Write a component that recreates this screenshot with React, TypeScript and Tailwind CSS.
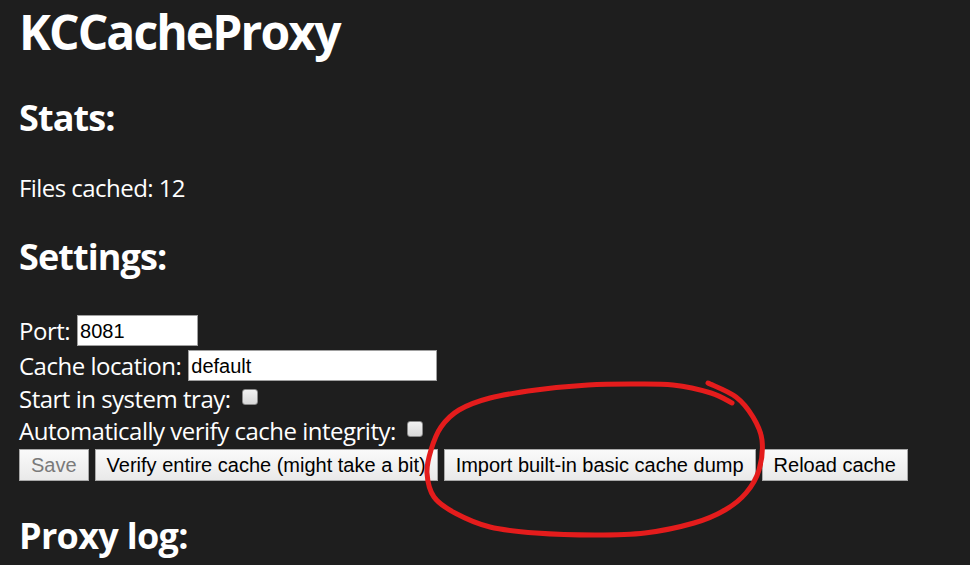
import React from 'react'

// hand-drawn red circle around the import button
const LOOP: [number, number][] = [
  [708, 383], [736, 397], [753, 417], [762, 440], [759, 470], [746, 493],
  [725, 510], [694, 523], [645, 533], [595, 535], [536, 533], [490, 527],
  [455, 513], [434, 497], [427, 473], [431, 450], [441, 427], [459, 410],
  [490, 398], [536, 390], [588, 385], [631, 384], [673, 385], [711, 393],
  [732, 403],
]

function smoothPath(pts: [number, number][]) {
  let d = `M${pts[0][0]},${pts[0][1]}`
  for (let i = 0; i < pts.length - 1; i++) {
    const p0 = pts[i - 1] || pts[i]
    const p1 = pts[i]
    const p2 = pts[i + 1]
    const p3 = pts[i + 2] || p2
    const c1x = p1[0] + (p2[0] - p0[0]) / 6
    const c1y = p1[1] + (p2[1] - p0[1]) / 6
    const c2x = p2[0] - (p3[0] - p1[0]) / 6
    const c2y = p2[1] - (p3[1] - p1[1]) / 6
    d += ` C${c1x},${c1y} ${c2x},${c2y} ${p2[0]},${p2[1]}`
  }
  return d
}

function Checkbox() {
  return (
    <span className="ml-[11px] mt-[6px] block shrink-0 w-[16px] h-[16px] rounded-[3px] border-[1.5px] border-[#8a8a8a] bg-gradient-to-b from-[#f2f2f2] to-[#d9d9d9]" />
  )
}

function Button({ children, disabled }: { children: React.ReactNode; disabled?: boolean }) {
  return (
    <button
      className={`h-[32px] px-[11px] border border-[#a9a9a9] bg-gradient-to-b from-[#fafafa] to-[#e9e9e9] font-['Liberation_Sans',Arial,sans-serif] text-[20px] leading-none tracking-normal ${disabled ? 'text-[#7a7a7a]' : 'text-black'}`}
    >
      {children}
    </button>
  )
}

const inputCls =
  "ml-[7px] h-[31px] bg-white border border-[#a0a0a0] px-[2px] text-black text-[20px] tracking-normal font-['Liberation_Sans',Arial,sans-serif] outline-none"

export default function App() {
  return (
    <div className="relative h-[565px] w-full overflow-hidden bg-[#1e1e1e] text-white font-['Open_Sans','Noto_Sans',sans-serif] pl-[19px]">
      <h1 className="text-[48px] font-bold leading-[64px] tracking-[-1.9px]">KCCacheProxy</h1>

      <h2 className="mt-[30px] text-[36px] font-bold leading-[48px] tracking-[-0.9px]">Stats:</h2>
      <p className="mt-[30px] text-[24px] leading-[32px] tracking-[-0.55px]">Files cached: 12</p>

      <h2 className="mt-[29px] text-[36px] font-bold leading-[48px] tracking-[-0.9px]">Settings:</h2>

      <div className="mt-[32px] text-[24px] leading-[32px] tracking-[-0.5px]">
        <div className="flex items-center h-[35px]">
          <span>Port:</span>
          <input defaultValue="8081" className={`${inputCls} w-[121px]`} />
        </div>
        <div className="flex items-center h-[35px]">
          <span>Cache location:</span>
          <input defaultValue="default" className={`${inputCls} w-[249px]`} />
        </div>
        <div className="flex items-start h-[32px]">
          <span>Start in system tray:</span>
          <Checkbox />
        </div>
        <div className="flex items-start h-[32px]">
          <span>Automatically verify cache integrity:</span>
          <Checkbox />
        </div>
        <div className="mt-[2px] flex gap-[6px]">
          <Button disabled>Save</Button>
          <Button>Verify entire cache (might take a bit)</Button>
          <Button>Import built-in basic cache dump</Button>
          <Button>Reload cache</Button>
        </div>
      </div>

      <h2 className="mt-[31px] text-[36px] font-bold leading-[48px] tracking-[-0.7px]">Proxy log:</h2>

      <svg className="pointer-events-none absolute left-0 top-0" width="970" height="565" viewBox="0 0 970 565">
        <path d={smoothPath(LOOP)} fill="none" stroke="#e41c1c" strokeWidth="5" strokeLinecap="round" strokeLinejoin="round" />
      </svg>
    </div>
  )
}
